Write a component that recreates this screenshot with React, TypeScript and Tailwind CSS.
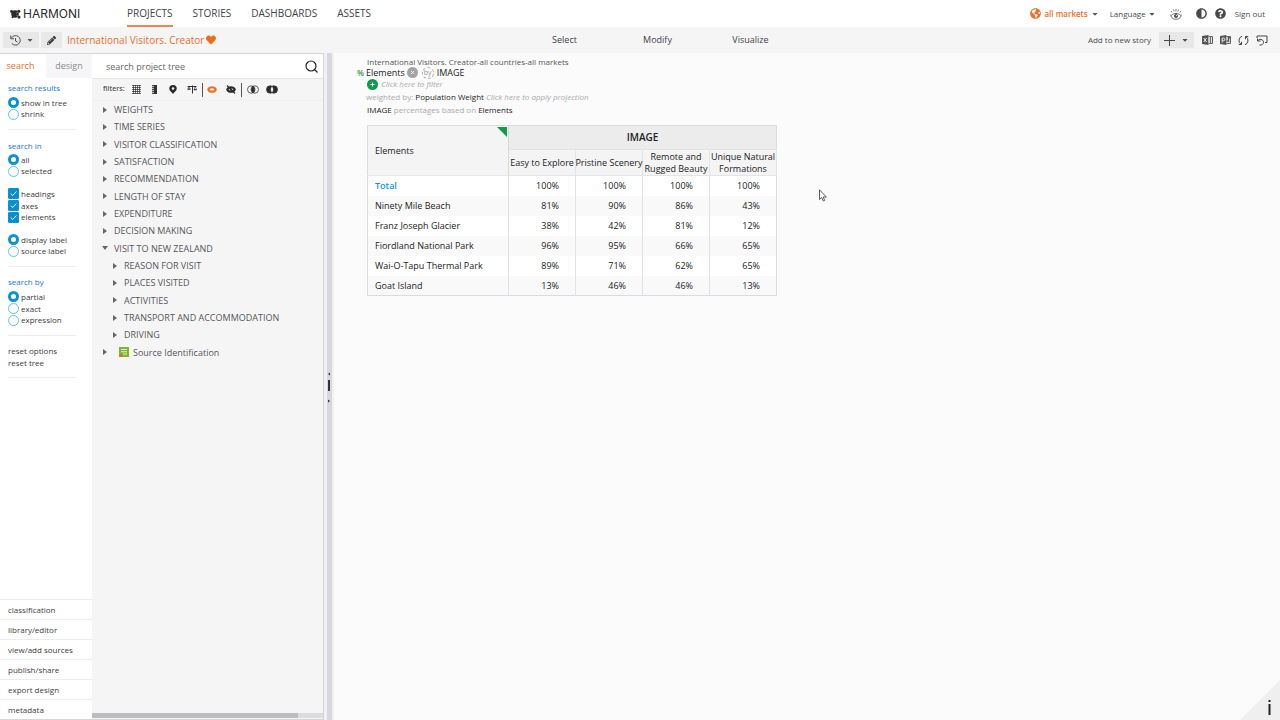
import React from "react";
import { FaHeart, FaPencilAlt, FaGlobeAmericas, FaCaretDown, FaQuestionCircle, FaAdjust } from "react-icons/fa";

const navItems = ["PROJECTS", "STORIES", "DASHBOARDS", "ASSETS"];
const modeItems = ["Select", "Modify", "Visualize"];

type Node = { label: string; level: 0 | 1; open?: boolean; source?: boolean };

const tree: Node[] = [
  { label: "WEIGHTS", level: 0 },
  { label: "TIME SERIES", level: 0 },
  { label: "VISITOR CLASSIFICATION", level: 0 },
  { label: "SATISFACTION", level: 0 },
  { label: "RECOMMENDATION", level: 0 },
  { label: "LENGTH OF STAY", level: 0 },
  { label: "EXPENDITURE", level: 0 },
  { label: "DECISION MAKING", level: 0 },
  { label: "VISIT TO NEW ZEALAND", level: 0, open: true },
  { label: "REASON FOR VISIT", level: 1 },
  { label: "PLACES VISITED", level: 1 },
  { label: "ACTIVITIES", level: 1 },
  { label: "TRANSPORT AND ACCOMMODATION", level: 1 },
  { label: "DRIVING", level: 1 },
  { label: "Source Identification", level: 0, source: true },
];

const columns: string[][] = [
  ["Easy to Explore"],
  ["Pristine Scenery"],
  ["Remote and", "Rugged Beauty"],
  ["Unique Natural", "Formations"],
];

const rows: { label: string; values: number[] }[] = [
  { label: "Total", values: [100, 100, 100, 100] },
  { label: "Ninety Mile Beach", values: [81, 90, 86, 43] },
  { label: "Franz Joseph Glacier", values: [38, 42, 81, 12] },
  { label: "Fiordland National Park", values: [96, 95, 66, 65] },
  { label: "Wai-O-Tapu Thermal Park", values: [89, 71, 62, 65] },
  { label: "Goat Island", values: [13, 46, 46, 13] },
];

const bottomLinks = ["classification", "library/editor", "view/add sources", "publish/share", "export design", "metadata"];

function Logo() {
  return (
    <svg viewBox="0 0 22 20" className="h-[10px] w-[11px]" fill="#2b2b2b">
      <circle cx="10" cy="10" r="7.500" />
      <circle cx="3" cy="5" r="2.800" />
      <circle cx="17.500" cy="4.500" r="3.200" />
      <circle cx="18" cy="16.500" r="2.800" />
      <circle cx="5" cy="16.500" r="2" />
      <path d="M12.500 8.500 L15.500 6 M13 12.500 L16 15" stroke="#fff" strokeWidth="1" />
    </svg>
  );
}

function HistoryIcon() {
  return (
    <svg viewBox="0 0 24 22" className="h-[11px] w-3" fill="none" stroke="#555" strokeWidth="2">
      <path d="M4.500 6.500 A9.500 9.500 0 1 1 5.500 16.500" />
      <path d="M3.500 1 V7.500 H10" />
      <path d="M13 6 V12 L17 14" />
    </svg>
  );
}

function EyeLashes() {
  return (
    <svg viewBox="0 0 24 24" className="h-3 w-3" fill="none" stroke="#555" strokeWidth="1.800">
      <path d="M1.500 13 C2 21 8 22.500 12 22.500 S22 21 22.500 13" />
      <path d="M3 15 C7 9.500 17 9.500 21 15" />
      <circle cx="12" cy="16" r="3.200" fill="#555" />
      <circle cx="13.200" cy="15" r="1.200" fill="#fff" stroke="none" />
      <path d="M12 2v5M7 3l1.500 4M17 3l-1.500 4M2 6l2.500 3M22 6l-2.500 3" strokeWidth="1.400" />
    </svg>
  );
}

function OfficeIcon({ letter }: { letter: "X" | "P" }) {
  return (
    <svg viewBox="0 0 22 20" className="h-[10px] w-[11px]">
      <path d="M0 2 L13 0 V20 L0 18Z" fill="#555" />
      <path d="M13 3 H21 V17 H13" fill="#d8d8d8" stroke="#555" strokeWidth="1.800" />
      {letter === "X" ? (
        <>
          <path d="M3.500 6 L9 14 M9 6 L3.500 14" stroke="#fff" strokeWidth="1.800" />
          <path d="M17 4 V16" stroke="#555" strokeWidth="1.500" />
        </>
      ) : (
        <>
          <path d="M4.500 15 V6 H7 a2.500 2.500 0 0 1 0 5.500 H4.500" fill="none" stroke="#fff" strokeWidth="1.800" />
          <path d="M13 12 L17 12 L17 5 H21" fill="none" stroke="#555" strokeWidth="2.500" />
        </>
      )}
    </svg>
  );
}

function RefreshIcon() {
  return (
    <svg viewBox="0 0 22 22" className="size-[11px]" fill="none" stroke="#444" strokeWidth="2">
      <path d="M8 2.500 A9 9 0 0 0 6 18.500 M1.500 19 H7 V13.500" />
      <path d="M14 19.500 A9 9 0 0 0 16 3.500 M20.500 3 H15 V8.500" />
    </svg>
  );
}

function ResetIcon() {
  return (
    <svg viewBox="0 0 24 22" className="h-[11px] w-3" fill="none" stroke="#444" strokeWidth="2">
      <path d="M2 6 V2 H22 V15 H18" />
      <path d="M3 7 V12 H9" />
      <path d="M3 12 C6 7 15 8 15 14.500 C15 19 11 21 7 20" />
    </svg>
  );
}

function GridIcon() {
  return (
    <svg viewBox="0 0 9 9" className="size-[9px]" fill="#333" shapeRendering="crispEdges">
      <path d="M0 0h9v1h-9zM0 2h9v1h-9zM0 4h9v1h-9zM0 6h9v1h-9zM0 8h9v1h-9z" opacity="0.700" />
      <path d="M1 0h1v9h-1zM3 0h1v9h-1zM5 0h1v9h-1zM7 0h1v9h-1z" opacity="0.700" />
    </svg>
  );
}

function RulerIcon() {
  return (
    <svg viewBox="0 0 10 18" className="h-[9px] w-[5px]">
      <rect width="10" height="18" fill="#bbb" />
      <rect x="4" width="6" height="18" fill="#333" />
      <path d="M0 1H6M0 5H7M0 9H6M0 13H7M0 17H6" stroke="#333" strokeWidth="1.600" />
    </svg>
  );
}

function PinIcon() {
  return (
    <svg viewBox="0 0 16 18" className="h-[9px] w-2" fill="#2b2b2b">
      <path d="M8 0 a7.500 7.500 0 0 1 7.500 7.500 C15.500 12 10 14 8 18 C6 14 .5 12 .5 7.500 A7.500 7.500 0 0 1 8 0Z" />
      <circle cx="8" cy="7" r="2.500" fill="#f5f5f6" />
    </svg>
  );
}

function ScaleIcon() {
  return (
    <svg viewBox="0 0 20 18" className="h-[9px] w-[10px]" fill="none" stroke="#333" strokeWidth="2">
      <path d="M1 3 H19 M11 1 V17" />
      <path d="M4 3 L1.500 8 H6.500Z M16.500 3 L14 9 H19Z" strokeWidth="1.200" />
      <path d="M1 8.500 H7 M13.500 9.500 H19.500" strokeWidth="2.200" />
    </svg>
  );
}

function EyeIcon({ off }: { off?: boolean }) {
  const c = off ? "#2b2b2b" : "#ec7023";
  return (
    <svg viewBox="0 0 20 18" className="h-[9px] w-[10px]" fill="none" stroke={c} strokeWidth="4">
      <path d="M2.500 9 C5 3 15 3 17.500 9 C15 15 5 15 2.500 9Z" />
      {off && (
        <>
          <circle cx="10" cy="9" r="2" fill={c} strokeWidth="1" />
          <path d="M2 1 L18 17" strokeWidth="2.200" />
        </>
      )}
    </svg>
  );
}

function VennIcon({ inverse }: { inverse?: boolean }) {
  return (
    <svg viewBox="0 0 24 18" className="h-[9px] w-3" fill={inverse ? "#2b2b2b" : "none"} stroke="#333" strokeWidth="1.500">
      <circle cx="8.500" cy="9" r="7.500" />
      <circle cx="15.500" cy="9" r="7.500" />
      <path d="M12 2.500 C16 6 16 12 12 15.500 C8 12 8 6 12 2.500Z" fill={inverse ? "#f5f5f6" : "#2b2b2b"} />
    </svg>
  );
}

function Option({ label, type, name, on }: { label: string; type: "radio" | "checkbox"; name: string; on?: boolean }) {
  return (
    <label className="flex items-center gap-[2px]">
      {type === "radio" ? (
        <input
          type="radio"
          name={name}
          defaultChecked={on}
          className="size-[11px] shrink-0 appearance-none rounded-full border border-[#62c0ea] bg-white checked:border-[3px] checked:border-[#0a93d3]"
        />
      ) : (
        <span className="grid size-[11px] shrink-0 place-items-center">
          <input
            type="checkbox"
            name={name}
            defaultChecked={on}
            className="col-start-1 row-start-1 size-[11px] appearance-none rounded-[1px] border border-[#0a93d3] checked:bg-[#0a8fcc]"
          />
          <svg viewBox="0 0 10 10" className="pointer-events-none col-start-1 row-start-1 size-[9px]" fill="none" stroke="#fff" strokeWidth="1">
            <path d="M2 5.200 L4.200 7.200 L8.200 2.800" />
          </svg>
        </span>
      )}
      <span className="text-[8px]">{label}</span>
    </label>
  );
}

function Heading({ children }: { children: React.ReactNode }) {
  return <h2 className="text-[8px] leading-3 text-[#1c78c8]">{children}</h2>;
}

function Rule() {
  return <hr className="w-[68px] border-[#ededf0]" />;
}

function Header() {
  return (
    <header className="flex h-[27px] shrink-0 items-center bg-white pr-[15px]">
      <div className="flex w-[127px] items-center gap-[2px] pl-[10px]">
        <Logo />
        <span className="font-['Inter',sans-serif] text-[12px] leading-none text-[#2b2b2b]">HARMONI</span>
      </div>
      <nav className="flex h-full gap-5 text-[10px] text-[#3f4247]">
        {navItems.map((n, i) => (
          <a key={n} href="#" className={i === 0 ? "flex items-center border-b-2 border-[#ec8550] pt-[2px]" : "flex items-center"}>
            {n}
          </a>
        ))}
      </nav>
      <div className="ml-auto flex items-center text-[8px] text-[#4a4a4a]">
        <button className="flex items-center gap-[3px] font-semibold text-[#e8702a]">
          <FaGlobeAmericas className="size-[11px]" />
          all markets
          <FaCaretDown className="size-2 text-[#555]" />
        </button>
        <button className="ml-[11px] flex items-center gap-[2px]">
          Language
          <FaCaretDown className="size-2 text-[#555]" />
        </button>
        <button aria-label="View" className="ml-[14px]">
          <EyeLashes />
        </button>
        <button aria-label="Contrast" className="ml-[14px]">
          <FaAdjust className="size-[11px] text-[#4a4a4a]" />
        </button>
        <button aria-label="Help" className="ml-2">
          <FaQuestionCircle className="size-[11px] text-[#4a4a4a]" />
        </button>
        <a href="#" className="ml-[9px]">Sign out</a>
      </div>
    </header>
  );
}

function Toolbar() {
  return (
    <div className="flex h-[26px] shrink-0 items-center bg-[#f5f5f6] pr-3">
      <div className="flex min-w-0 flex-1 items-center pl-[3px]">
        <button aria-label="History" className="flex h-4 w-9 items-center justify-center gap-[5px] bg-[#e8e8e9] text-[#555]">
          <HistoryIcon />
          <FaCaretDown className="size-2" />
        </button>
        <button aria-label="Edit" className="ml-[2px] flex h-4 w-[21px] items-center justify-center bg-[#e8e8e9] text-[#333]">
          <FaPencilAlt className="size-[9px]" />
        </button>
        <h1 className="ml-[5px] text-[10px] font-medium whitespace-nowrap text-[#e8702a]">International Visitors. Creator</h1>
        <FaHeart className="ml-[2px] size-[10px] text-[#e8701a]" />
      </div>
      <nav className="flex pl-11 text-[9px] text-[#3f4247]">
        {modeItems.map((m) => (
          <a key={m} href="#" className="w-[93px] text-center">
            {m}
          </a>
        ))}
      </nav>
      <div className="flex flex-1 items-center justify-end text-[8px] text-[#4a4a4a]">
        <span>Add to new story</span>
        <button aria-label="Add" className="mx-2 flex h-4 w-[35px] items-center justify-center gap-[6px] bg-[#e8e8e9]">
          <svg viewBox="0 0 11 11" className="size-[11px]" stroke="#444" fill="none">
            <path d="M5.500 0V11M0 5.500H11" />
          </svg>
          <FaCaretDown className="size-2" />
        </button>
        <div className="flex items-center gap-[7px]">
          <button aria-label="Excel"><OfficeIcon letter="X" /></button>
          <button aria-label="PowerPoint"><OfficeIcon letter="P" /></button>
          <button aria-label="Refresh"><RefreshIcon /></button>
          <button aria-label="Reset"><ResetIcon /></button>
        </div>
      </div>
    </div>
  );
}

function OptionsPanel() {
  return (
    <aside className="flex w-[92px] shrink-0 flex-col bg-white text-[#3c3c3c]">
      <div className="flex h-[24px] shrink-0 text-[9px]">
        <button className="w-[46px] pr-[5px] text-[#ec7023]">search</button>
        <button className="flex-1 bg-[#f6f6f9] text-[#8a8a8a]">design</button>
      </div>
      <div className="flex flex-1 flex-col pl-2">
        <div className="pt-1">
          <Heading>search results</Heading>
          <div className="mt-[3px] grid h-[23px] auto-rows-fr">
            <Option type="radio" name="results" label="show in tree" on />
            <Option type="radio" name="results" label="shrink" />
          </div>
        </div>
        <div className="mt-[9px]"><Rule /></div>
        <div className="pt-[10px]">
          <Heading>search in</Heading>
          <div className="mt-[2px] grid h-[23px] auto-rows-fr">
            <Option type="radio" name="scope" label="all" on />
            <Option type="radio" name="scope" label="selected" />
          </div>
          <div className="mt-[11px] grid h-[35px] auto-rows-fr">
            <Option type="checkbox" name="headings" label="headings" on />
            <Option type="checkbox" name="axes" label="axes" on />
            <Option type="checkbox" name="elements" label="elements" on />
          </div>
          <div className="mt-[11px] grid h-[23px] auto-rows-fr">
            <Option type="radio" name="label" label="display label" on />
            <Option type="radio" name="label" label="source label" />
          </div>
        </div>
        <div className="mt-[9px]"><Rule /></div>
        <div className="pt-[9px]">
          <Heading>search by</Heading>
          <div className="mt-[3px] grid h-[35px] auto-rows-fr">
            <Option type="radio" name="by" label="partial" on />
            <Option type="radio" name="by" label="exact" />
            <Option type="radio" name="by" label="expression" />
          </div>
        </div>
        <div className="mt-[9px]"><Rule /></div>
        <div className="mt-[9px] flex flex-col items-start text-[8px] leading-3">
          <button>reset options</button>
          <button>reset tree</button>
        </div>
        <div className="mt-2"><Rule /></div>
      </div>
      <nav className="text-[8px]">
        {bottomLinks.map((l) => (
          <a key={l} href="#" className="flex h-5 items-center border-t border-[#ececef] pl-2">
            {l}
          </a>
        ))}
      </nav>
    </aside>
  );
}

function TreePanel() {
  return (
    <section className="flex w-[232px] shrink-0 flex-col border-r border-[#d4d4d6] bg-[#f5f5f6]">
      <div className="flex h-[25px] shrink-0 items-center border-b border-[#e6e6e8] bg-white pr-[5px] pl-[14px]">
        <input
          aria-label="search project tree"
          placeholder="search project tree"
          className="min-w-0 flex-1 bg-transparent pt-[1px] text-[9px] outline-none placeholder:text-[#666]"
        />
        <button aria-label="Search">
          <svg viewBox="0 0 13 13" className="size-[13px]" fill="none" stroke="#222" strokeWidth="1.200">
            <circle cx="6" cy="6" r="5" />
            <path d="M9.500 9.500 L12.500 12.500" />
          </svg>
        </button>
      </div>
      <div className="flex h-[22px] shrink-0 items-center border-b border-[#efeff1] pl-[11px] text-[7px] font-semibold text-[#555]">
        <span className="w-[29px]">filters:</span>
        <button aria-label="Grid"><GridIcon /></button>
        <button aria-label="Scale" className="ml-[11px]"><RulerIcon /></button>
        <button aria-label="Location" className="ml-3"><PinIcon /></button>
        <button aria-label="Weight" className="ml-[10px]"><ScaleIcon /></button>
        <span className="ml-[5px] h-[14px] w-px bg-[#555]" />
        <button aria-label="Visible" className="ml-1"><EyeIcon /></button>
        <button aria-label="Hidden" className="ml-[9px]"><EyeIcon off /></button>
        <span className="ml-[5px] h-[14px] w-px bg-[#555]" />
        <button aria-label="Intersection" className="ml-[5px]"><VennIcon /></button>
        <button aria-label="Difference" className="ml-[7px]"><VennIcon inverse /></button>
      </div>
      <ul className="grid h-[260px] shrink-0 auto-rows-fr text-[9px] text-[#55565a]">
        {tree.map((n) => (
          <li key={n.label} className={n.level === 1 ? "flex items-center pl-5" : "flex items-center pl-[10px]"}>
            <svg viewBox="0 0 6 6" className={n.open ? "size-[6px] rotate-90" : "size-[6px]"} fill="#666">
              <path d="M1 0 L5 3 L1 6Z" />
            </svg>
            {n.source && (
              <svg viewBox="0 0 20 20" className="ml-[11px] size-[10px]">
                <rect width="20" height="20" fill="#7db72f" />
                <path d="M4 5H16M4 9.500H16M8 14H16" stroke="#fff" strokeWidth="1.600" />
                <circle cx="4" cy="17" r="3.500" fill="#ec6a1c" />
              </svg>
            )}
            <span className={n.source ? "ml-1" : "ml-[6px]"}>{n.label}</span>
          </li>
        ))}
      </ul>
      <div className="mt-auto mb-[1px] h-[5px] bg-[#dcdcde]">
        <div className="h-full w-[89%] bg-[#bdbdbf]" />
      </div>
    </section>
  );
}

function Splitter() {
  return (
    <div className="flex w-[10px] shrink-0 justify-center bg-[#f1f1f3]">
      <div className="flex w-[5px] flex-col items-center justify-center gap-1 bg-[#d8d8dc] pt-[2px]">
        <svg viewBox="0 0 4 4" className="size-1" fill="#333"><path d="M3 0.500 L1 2 L3 3.500Z" /></svg>
        <span className="h-[11px] w-[2px] bg-[#333]" />
        <svg viewBox="0 0 4 4" className="mt-1 size-1" fill="#333"><path d="M1 0.500 L3 2 L1 3.500Z" /></svg>
      </div>
    </div>
  );
}

function DataTable() {
  return (
    <table className="w-[410px] table-fixed border-collapse border border-[#dcdce0] text-[9px] text-[#222]">
      <colgroup>
        <col className="w-[141px]" />
        <col />
        <col />
        <col />
        <col />
      </colgroup>
      <thead>
        <tr className="h-6">
          <th rowSpan={2} className="relative border-r border-b border-r-[#d4d9de] border-b-[#e8e8eb] bg-[#f4f4f5] p-0 pl-[7px] text-left font-normal">
            Elements
            <svg viewBox="0 0 10 10" className="absolute top-[1px] right-[1px] size-[10px]" fill="#0f9b4b">
              <path d="M0 0H10V10Z" />
            </svg>
          </th>
          <th colSpan={4} className="border-b border-[#e2e2e5] bg-[#ececed] p-0 text-[10px] font-semibold">IMAGE</th>
        </tr>
        <tr className="h-[26px]">
          {columns.map((lines) => (
            <th key={lines[0]} className="border-x border-b border-[#e3e4e9] bg-[#f4f4f5] p-0 leading-3 font-normal whitespace-nowrap">
              {lines.map((l) => (
                <span key={l} className="flex justify-center">{l}</span>
              ))}
            </th>
          ))}
        </tr>
      </thead>
      <tbody>
        {rows.map((r, i) => (
          <tr key={r.label} className={i % 2 === 0 ? "h-5 bg-white" : "h-5 bg-[#f9f9fa]"}>
            <th scope="row" className={i === 0 ? "p-0 pl-[7px] text-left font-semibold text-[#1097d8]" : "p-0 pl-[7px] text-left font-normal"}>
              {r.label}
            </th>
            {r.values.map((v, j) => (
              <td key={j} className="border-l border-[#dfe3e9] p-0 pr-4 text-right">{v}%</td>
            ))}
          </tr>
        ))}
      </tbody>
    </table>
  );
}

function Workspace() {
  return (
    <main className="relative min-w-0 flex-1 overflow-hidden bg-[#fbfbfc] pl-[33px] text-[8px] text-[#222]">
      <div className="pt-[3px] leading-[11px] text-[#555]">International Visitors. Creator-all countries-all markets</div>
      <div className="-ml-[10px] flex h-[11px] items-center text-[9px]">
        <span className="w-[9px] text-[8px] font-semibold text-[#2f9b45]">%</span>
        <span>Elements</span>
        <button aria-label="Remove" className="ml-[2px]">
          <svg viewBox="0 0 12 12" className="size-[11px]">
            <circle cx="6" cy="6" r="6" fill="#a3a3a5" />
            <path d="M4.500 4.500 L7.500 7.500 M7.500 4.500 L4.500 7.500" stroke="#fff" />
          </svg>
        </button>
        <span className="mx-[3px] ml-1 flex size-3 items-center justify-center rounded-full border border-dashed border-[#aaa] text-[7px] leading-none text-[#999]">by</span>
        <span>IMAGE</span>
      </div>
      <div className="flex h-3 items-center gap-[3px]">
        <button aria-label="Add filter">
          <svg viewBox="0 0 11 11" className="size-[11px]">
            <circle cx="5.500" cy="5.500" r="5.500" fill="#0f9b4b" />
            <path d="M5.500 3.500V7.500M3.500 5.500H7.500" stroke="#fff" />
          </svg>
        </button>
        <a href="#" className="text-[#aaa] italic">Click here to filter</a>
      </div>
      <div className="-ml-[1px] h-[13px] leading-[13px] text-[#aaa]">
        weighted by: <span className="text-[#222]">Population Weight</span> <a href="#" className="italic">Click here to apply projection</a>
      </div>
      <div className="mb-[9px] h-[13px] leading-[13px] text-[#aaa]">
        <span className="text-[#222]">IMAGE</span> percentages based on <span className="text-[#222]">Elements</span>
      </div>
      <DataTable />
      <svg viewBox="0 0 8 13" className="absolute top-[136px] left-[485px] h-[13px] w-2" fill="#fff" stroke="#333" strokeWidth="0.800">
        <path d="M0.500 0.800 V10.500 L2.700 8.500 L4.300 12 L5.700 11.400 L4.200 8 H7.300Z" />
      </svg>
      <button aria-label="Information" className="absolute right-0 bottom-0 h-10 w-10">
        <svg viewBox="0 0 40 40" className="size-10">
          <path d="M40 0V40H0Z" fill="#efeff0" />
          <path d="M29.500 20V22M29.500 24V35" stroke="#222" strokeWidth="2" />
        </svg>
      </button>
    </main>
  );
}

export default function App() {
  return (
    <div className="flex min-h-screen flex-col bg-white font-['Open_Sans','Noto_Sans',sans-serif]">
      <Header />
      <Toolbar />
      <div className="flex flex-1">
        <div className="flex border-t border-b border-t-[#d6d6d8] border-b-[#d6d6d8]">
          <OptionsPanel />
          <TreePanel />
        </div>
        <Splitter />
        <Workspace />
      </div>
    </div>
  );
}
